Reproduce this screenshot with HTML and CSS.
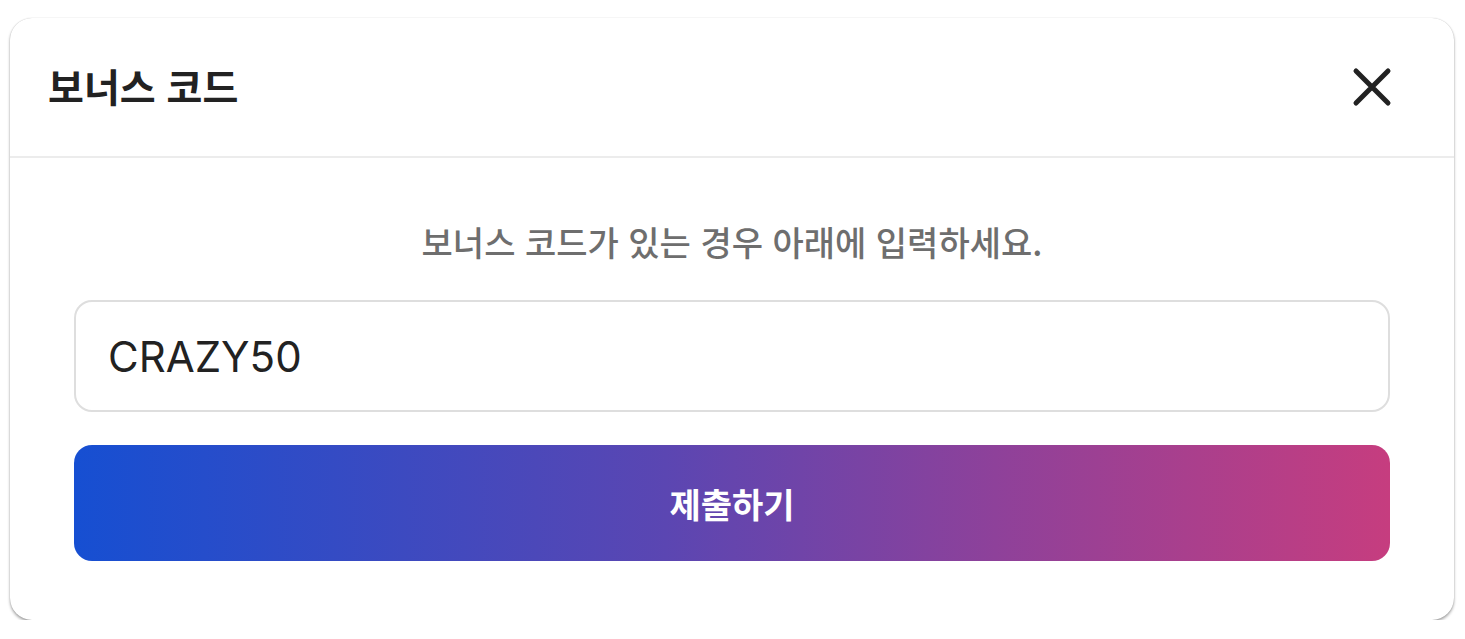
FILE: index.html
```html
<!DOCTYPE html>
<html lang="ko">
<head>
    <meta charset="UTF-8">
    <meta name="viewport" content="width=device-width, initial-scale=1.0">
    <title>보너스 코드</title>
    <link rel="stylesheet" href="styles.css">
</head>
<body>
    <div class="backdrop">
        <div class="modal">
            <header class="modal-header">
                <h2>보너스 코드</h2>
                <button class="close" type="button" aria-label="닫기">
                    <svg width="40" height="40" viewBox="0 0 40 40">
                        <path d="M4 4 L36 36 M36 4 L4 36" stroke="#222" stroke-width="5" stroke-linecap="round" fill="none"/>
                    </svg>
                </button>
            </header>
            <form class="modal-body" id="bonusForm">
                <p class="hint">보너스 코드가 있는 경우 아래에 입력하세요.</p>
                <input type="text" id="bonusCode" value="CRAZY50">
                <button type="submit" class="submit">제출하기</button>
            </form>
        </div>
    </div>
</body>
</html>
```

FILE: styles.css
```css
body {
    margin: 0;
    padding: 0;
    background: #fff;
    font-family: "Noto Sans CJK KR", "Noto Sans", sans-serif;
}
.backdrop {
    padding: 18px 11px 0 10px;
}
.modal {
    background: #fff;
    border-radius: 22px;
    box-shadow: 0 2px 3px rgba(0,0,0,0.35), 0 0 1px rgba(0,0,0,0.25);
    height: 602px;
    overflow: hidden;
}
.modal-header {
    height: 140px;
    border-bottom: 2px solid #ececec;
    box-sizing: border-box;
    display: flex;
    align-items: center;
    justify-content: space-between;
    padding: 0 62px 0 38px;
}
.modal-header h2 {
    margin: 0 0 4px;
    font-size: 39px;
    font-weight: 700;
    color: #222;
}
.close {
    border: 0;
    background: none;
    padding: 0;
    width: 40px;
    height: 40px;
    cursor: pointer;
}
.modal-body {
    display: flex;
    flex-direction: column;
    padding: 0 64px;
}
.hint {
    margin: 61px 0 0;
    height: 46px;
    line-height: 46px;
    text-align: center;
    font-size: 34px;
    font-weight: 500;
    color: #6e6e6e;
}
.modal-body input {
    margin-top: 35px;
    height: 112px;
    box-sizing: border-box;
    border: 2px solid #dedede;
    border-radius: 18px;
    padding: 0 32px;
    font-family: Inter, "Noto Sans", sans-serif;
    font-size: 42px;
    color: #222;
    outline: none;
}
.submit {
    margin-top: 33px;
    height: 116px;
    border: 0;
    border-radius: 18px;
    background: linear-gradient(90deg, #164fd2 0%, #5b46b2 45%, #8e419a 70%, #c63d7f 100%);
    color: #fff;
    font-family: "Noto Sans CJK KR", sans-serif;
    font-size: 34px;
    font-weight: 700;
    cursor: pointer;
}
```
